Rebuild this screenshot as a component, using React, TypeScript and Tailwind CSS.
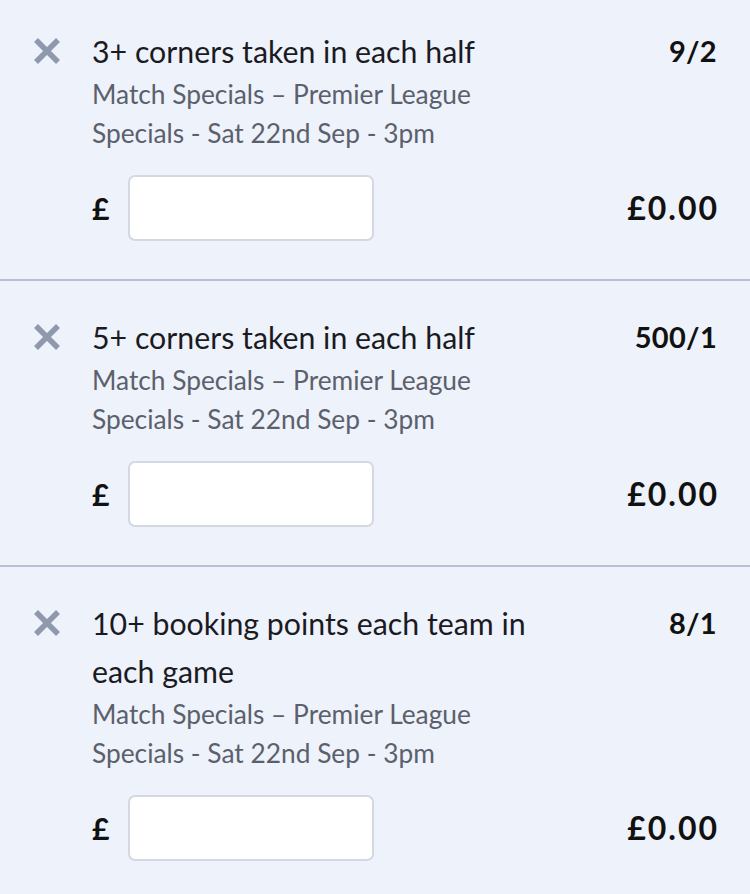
import React from "react";

type Bet = { title: string; odds: string };

const bets: Bet[] = [
  { title: "3+ corners taken in each half", odds: "9/2" },
  { title: "5+ corners taken in each half", odds: "500/1" },
  { title: "10+ booking points each team in each game", odds: "8/1" },
];

function XIcon() {
  return (
    <svg width="28" height="28" viewBox="0 0 28 28" className="block">
      <path d="M3 3 L25 25 M25 3 L3 25" stroke="#8e99ae" strokeWidth="5.5" strokeLinecap="butt" fill="none" />
    </svg>
  );
}

function Row({ bet, first }: { bet: Bet; first: boolean }) {
  return (
    <div
      className={`flex pl-[33px] pr-[33px] pt-[32px] pb-[38px] ${first ? "mt-[-5px]" : "border-t-2 border-[#b7c0d4]"}`}
    >
      <div className="w-[28px] shrink-0 pt-[10px]">
        <XIcon />
      </div>
      <div className="ml-[31px] flex-1 min-w-0">
        <div className="flex justify-between items-start">
          <div className="text-[30.3px] leading-[48px] text-[#1b1b1f] max-w-[450px]">{bet.title}</div>
          <div className="text-[29px] leading-[48px] font-bold text-[#111] tracking-[0.3px]">{bet.odds}</div>
        </div>
        <div className="text-[26.3px] leading-[39px] text-[#5b606c]">
          Match Specials – Premier League
          <br />
          Specials - Sat 22nd Sep - 3pm
        </div>
        <div className="mt-[22px] flex items-center justify-between">
          <div className="flex items-center">
            <span className="text-[30px] font-bold text-[#111] w-[36px]">£</span>
            <div className="w-[246px] h-[66px] rounded-[7px] bg-white border-2 border-[#d3d8e1]" />
          </div>
          <div className="text-[32px] font-bold text-[#111] tracking-[2px] mr-[-2px]">£0.00</div>
        </div>
      </div>
    </div>
  );
}

export default function App() {
  return (
    <div
      className="w-[750px] h-[894px] overflow-hidden bg-[#eef2fb]"
      style={{ fontFamily: 'Lato, "Open Sans", sans-serif' }}
    >
      {bets.map((b, i) => (
        <Row key={i} bet={b} first={i === 0} />
      ))}
    </div>
  );
}
